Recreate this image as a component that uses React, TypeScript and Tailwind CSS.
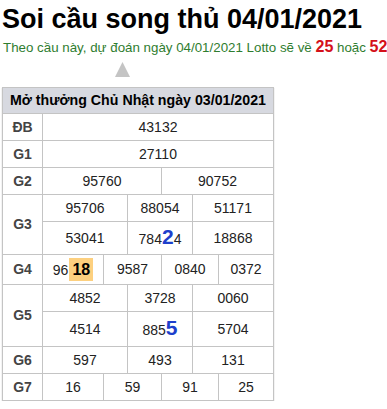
const cell = "border border-[#c4c4c4] p-0 text-center";
const label = "border border-[#c4c4c4] p-0 text-center font-bold text-[#444]";

function Big({ children }: { children: string }) {
  return <span className="text-[21px] font-bold leading-none text-[#1d3fcc]">{children}</span>;
}

function App() {
  return (
    <div className="px-[2px] font-['Liberation_Sans',Arial,sans-serif] text-[#222]">
      <h1 className="mt-[4px] text-[27px] font-bold leading-[31px] text-black">Soi cầu song thủ 04/01/2021</h1>
      <div className="mt-[4px] whitespace-nowrap pl-px text-[13.33px] leading-[18px] text-[#2f7d2f]">
        Theo cầu này, dự đoán ngày 04/01/2021 Lotto sẽ về{" "}
        <b className="text-[16px] leading-none text-[#d4101a]">25</b> hoặc{" "}
        <b className="text-[16px] leading-none text-[#d4101a]">52</b>
      </div>
      <svg className="ml-[113px] mt-[5px] block" width="15" height="15" viewBox="0 0 15 15">
        <polygon points="7.5,0 15,15 0,15" fill="#c4c4c4" />
      </svg>
      <table className="mt-[10px] w-[271px] table-fixed border-collapse text-[14px] shadow-[0_1px_1px_#b8b8b8]">
        <colgroup>
          <col className="w-[40px]" />
          <col className="w-[61px]" />
          <col className="w-[24px]" />
          <col className="w-[34px]" />
          <col className="w-[31px]" />
          <col className="w-[26px]" />
          <col className="w-[55px]" />
        </colgroup>
        <tbody>
          <tr className="h-[26px]">
            <th colSpan={7} className="whitespace-nowrap border border-[#c4c4c4] bg-[#d7d9e0] p-0 pl-[7px] text-left text-[14.2px] font-bold text-black">
              Mở thưởng Chủ Nhật ngày 03/01/2021
            </th>
          </tr>
          <tr className="h-[27px]">
            <td className={label}>ĐB</td>
            <td colSpan={6} className={cell}>43132</td>
          </tr>
          <tr className="h-[27px]">
            <td className={label}>G1</td>
            <td colSpan={6} className={cell}>27110</td>
          </tr>
          <tr className="h-[27px]">
            <td className={label}>G2</td>
            <td colSpan={3} className={cell}>95760</td>
            <td colSpan={3} className={cell}>90752</td>
          </tr>
          <tr className="h-[27px]">
            <td rowSpan={2} className={label}>G3</td>
            <td colSpan={2} className={cell}>95706</td>
            <td colSpan={2} className={cell}>88054</td>
            <td colSpan={2} className={cell}>51171</td>
          </tr>
          <tr className="h-[33px]">
            <td colSpan={2} className={cell}>53041</td>
            <td colSpan={2} className={cell}>
              784<Big>2</Big>4
            </td>
            <td colSpan={2} className={cell}>18868</td>
          </tr>
          <tr className="h-[30px]">
            <td className={label}>G4</td>
            <td className={cell}>
              96
              <span className="ml-px inline-block bg-[#fdd07f] px-[3px] text-[16px] font-bold leading-[23px] text-black">18</span>
            </td>
            <td colSpan={2} className={cell}>9587</td>
            <td colSpan={2} className={cell}>0840</td>
            <td className={cell}>0372</td>
          </tr>
          <tr className="h-[27px]">
            <td rowSpan={2} className={label}>G5</td>
            <td colSpan={2} className={cell}>4852</td>
            <td colSpan={2} className={cell}>3728</td>
            <td colSpan={2} className={cell}>0060</td>
          </tr>
          <tr className="h-[35px]">
            <td colSpan={2} className={cell}>4514</td>
            <td colSpan={2} className={cell}>
              885<Big>5</Big>
            </td>
            <td colSpan={2} className={cell}>5704</td>
          </tr>
          <tr className="h-[27px]">
            <td className={label}>G6</td>
            <td colSpan={2} className={cell}>597</td>
            <td colSpan={2} className={cell}>493</td>
            <td colSpan={2} className={cell}>131</td>
          </tr>
          <tr className="h-[27px]">
            <td className={label}>G7</td>
            <td className={cell}>16</td>
            <td colSpan={2} className={cell}>59</td>
            <td colSpan={2} className={cell}>91</td>
            <td className={cell}>25</td>
          </tr>
        </tbody>
      </table>
    </div>
  );
}

export default App;
